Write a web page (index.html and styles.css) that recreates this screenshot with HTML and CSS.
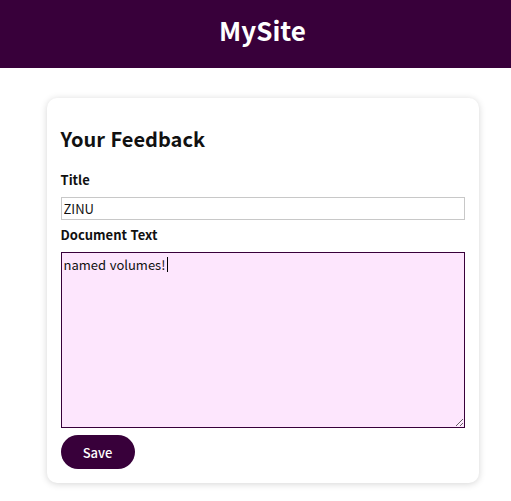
FILE: index.html
```html
<!DOCTYPE html>
<html lang="ko">
<head>
<meta charset="utf-8">
<title>MySite</title>
<link rel="stylesheet" href="styles.css">
</head>
<body>
<header class="site-header">
  <h1 class="site-title">MySite</h1>
</header>
<main class="page">
  <form class="card">
    <h2 class="card-title">Your Feedback</h2>
    <label class="field-label" for="title">Title</label>
    <input class="text-input" id="title" type="text" value="ZINU">
    <label class="field-label" for="doc">Document Text</label>
    <div class="textarea-wrap">
      <textarea class="text-area" id="doc">named volumes!</textarea>
      <span class="caret"></span>
    </div>
    <button class="save-btn" type="button">Save</button>
  </form>
</main>
</body>
</html>
```
FILE: styles.css
```css
* { box-sizing: border-box; }
html, body { margin: 0; padding: 0; background: #fff; }
body {
  font-family: "Noto Sans CJK KR", "Noto Sans", sans-serif;
  color: #111;
}
.site-header {
  background: #38003a;
  height: 68px;
  padding: 0 0 8px 14px;
  display: flex;
  align-items: center;
  justify-content: center;
}
.site-title {
  margin: 0;
  color: #fff;
  font-size: 26px;
  font-weight: 700;
  line-height: 36px;
}
.page {
  padding: 30px 0 18px 14px;
  display: flex;
  justify-content: center;
}
.card {
  width: 432px;
  background: #fff;
  border-radius: 10px;
  box-shadow: 0 1px 7px rgba(0, 0, 0, 0.17);
  padding: 27px 14px 14px;
  display: flex;
  flex-direction: column;
  align-items: flex-start;
}
.card-title {
  margin: 0 0 17px;
  font-size: 20px;
  font-weight: 700;
  line-height: 28px;
  color: #111;
}
.field-label {
  font-size: 13px;
  font-weight: 700;
  line-height: 20px;
  margin-bottom: 7px;
}
.text-input {
  width: 100%;
  height: 23px;
  border: 1px solid #c8c8c8;
  padding: 0 2px;
  font-family: inherit;
  font-size: 13px;
  color: #111;
  margin-bottom: 5px;
  outline: none;
}
.textarea-wrap {
  position: relative;
  width: 100%;
  margin-bottom: 7px;
}
.text-area {
  display: block;
  width: 100%;
  height: 176px;
  background: #fde6fd;
  border: 1px solid #38003a;
  padding: 2px;
  font-family: inherit;
  font-size: 13px;
  color: #111;
  resize: vertical;
  outline: none;
}
.caret {
  position: absolute;
  left: 106px;
  top: 5px;
  width: 1px;
  height: 15px;
  background: #000;
}
.save-btn {
  width: 74px;
  height: 34px;
  border: none;
  border-radius: 17px;
  background: #38003a;
  color: #fff;
  font-family: inherit;
  font-size: 13px;
  font-weight: 500;
  cursor: pointer;
}
```
